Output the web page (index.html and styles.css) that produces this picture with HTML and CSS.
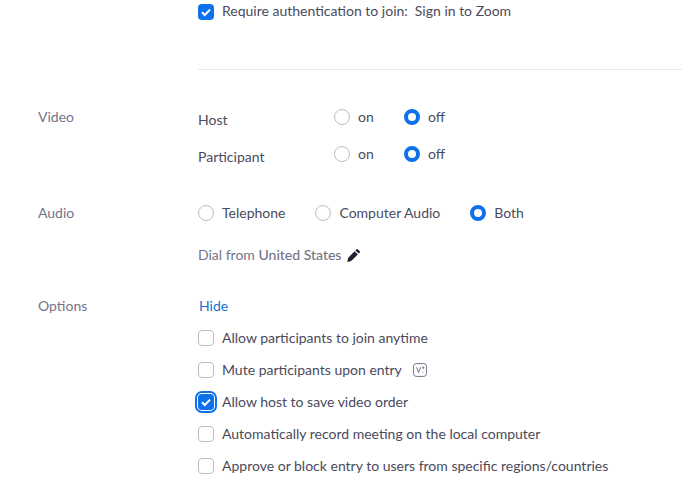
FILE: index.html
```html
<!DOCTYPE html>
<html lang="en">
<head>
  <meta charset="UTF-8" />
  <title>Schedule Meeting</title>
  <link rel="stylesheet" href="styles.css">
</head>
<body>
  <div class="auth-row">
    <label class="check-item">
      <span class="check checked"><svg viewBox="0 0 16 16"><path d="M4 8.3l2.8 2.7L12 5.6"/></svg></span>
      <span class="auth-text">Require authentication to join:<span class="auth-value">Sign in to Zoom</span></span>
    </label>
  </div>
  <div class="divider"></div>

  <div class="section section-video">
    <div class="section-label">Video</div>
    <div class="section-body">
      <div class="video-row">
        <div class="video-name">Host</div>
        <div class="radio-group video-radios">
          <span class="radio-item"><span class="radio"></span>on</span>
          <span class="radio-item"><span class="radio selected"></span>off</span>
        </div>
      </div>
      <div class="video-row">
        <div class="video-name">Participant</div>
        <div class="radio-group video-radios">
          <span class="radio-item"><span class="radio"></span>on</span>
          <span class="radio-item"><span class="radio selected"></span>off</span>
        </div>
      </div>
    </div>
  </div>

  <div class="section section-audio">
    <div class="section-label">Audio</div>
    <div class="section-body">
      <div class="radio-group audio-radios">
        <span class="radio-item"><span class="radio"></span>Telephone</span>
        <span class="radio-item"><span class="radio"></span>Computer Audio</span>
        <span class="radio-item"><span class="radio selected"></span>Both</span>
      </div>
      <div class="dial-from">
        <span>Dial from <b>United States</b></span>
        <svg class="pencil" viewBox="0 0 14 14"><path d="M9.6 1.2a.8.8 0 0 1 1.1 0l2.1 2.1a.8.8 0 0 1 0 1.1l-1.2 1.2-3.2-3.2zM7.6 3.2l3.2 3.2-6.6 6.6-3.9.9.8-4z"/></svg>
      </div>
    </div>
  </div>

  <div class="section section-options">
    <div class="section-label">Options</div>
    <div class="section-body">
      <a class="hide-link" href="#">Hide</a>
      <div class="option-list">
        <label class="check-item"><span class="check"></span><span>Allow participants to join anytime</span></label>
        <label class="check-item">
          <span class="check"></span><span>Mute participants upon entry</span>
          <svg class="vm-icon" viewBox="0 0 14 14"><rect x="0.6" y="0.6" width="12.8" height="12.8" rx="2.6"/><path d="M3.6 4.2l2 5.4 2-5.4M9 4.2h2l-1.2 2M9.6 9.4h.8"/></svg>
        </label>
        <label class="check-item">
          <span class="check checked focused"><svg viewBox="0 0 16 16"><path d="M4 8.3l2.8 2.7L12 5.6"/></svg></span>
          <span>Allow host to save video order</span>
        </label>
        <label class="check-item"><span class="check"></span><span>Automatically record meeting on the local computer</span></label>
        <label class="check-item"><span class="check"></span><span>Approve or block entry to users from specific regions/countries</span></label>
      </div>
    </div>
  </div>
</body>
</html>
```

FILE: styles.css
```css
body {
  margin: 0;
  height: 482px;
  overflow: hidden;
  background: white;
  font-family: 'Lato', sans-serif;
  font-size: 14px;
  line-height: 20px;
  color: #4a4a5c;
}

.auth-row {
  padding: 2px 0 0 198px;
}

.auth-text {
  margin-top: -2px;
}

.auth-value {
  margin-left: 7px;
}

.divider {
  height: 1px;
  margin: 47px 1px 0 198px;
  background: #e8e8ea;
}

.section {
  display: flex;
}

.section-label {
  width: 160px;
  padding-left: 38px;
  flex: none;
  color: #747487;
}

.section-video {
  margin-top: 37px;
}

.video-row {
  display: flex;
  height: 37px;
}

.video-name {
  width: 136px;
  padding-top: 3px;
}

.video-radios .radio-item {
  width: 70px;
}

.radio-group {
  display: flex;
}

.audio-radios .radio-item {
  margin-right: 30px;
}

.radio-item {
  display: flex;
  align-items: center;
  gap: 8px;
  height: 20px;
}

.radio {
  width: 16px;
  height: 16px;
  box-sizing: border-box;
  border: 1px solid #bdbdc7;
  border-radius: 50%;
  background: white;
}

.radio.selected {
  border: 4px solid #0e71eb;
}

.section-audio {
  margin-top: 22px;
}

.dial-from {
  display: flex;
  align-items: center;
  margin-top: 22px;
  color: #747487;
}

.dial-from b {
  font-weight: 500;
}

.pencil {
  width: 14px;
  height: 14px;
  margin-left: 6px;
  fill: #1f2033;
}

.section-options {
  margin-top: 31px;
}

.hide-link {
  display: block;
  margin-left: 1px;
  color: #1a6fd0;
  text-decoration: none;
}

.option-list {
  margin-top: 12px;
  display: flex;
  flex-direction: column;
  gap: 12px;
}

.check-item {
  display: flex;
  align-items: center;
  gap: 8px;
  height: 20px;
}

.check {
  width: 16px;
  height: 16px;
  box-sizing: border-box;
  border: 1px solid #bdbdc7;
  border-radius: 4px;
  background: white;
  flex: none;
}

.check svg {
  display: block;
  width: 16px;
  height: 16px;
  fill: none;
  stroke: white;
  stroke-width: 2;
}

.check.checked {
  border: none;
  background: #0e71eb;
}

.check.focused {
  box-shadow: 0 0 0 1px white, 0 0 0 3px #0e71eb;
}

.vm-icon {
  width: 14px;
  height: 14px;
  margin-left: 3px;
  fill: none;
  stroke: #747487;
  stroke-width: 1;
}
```
